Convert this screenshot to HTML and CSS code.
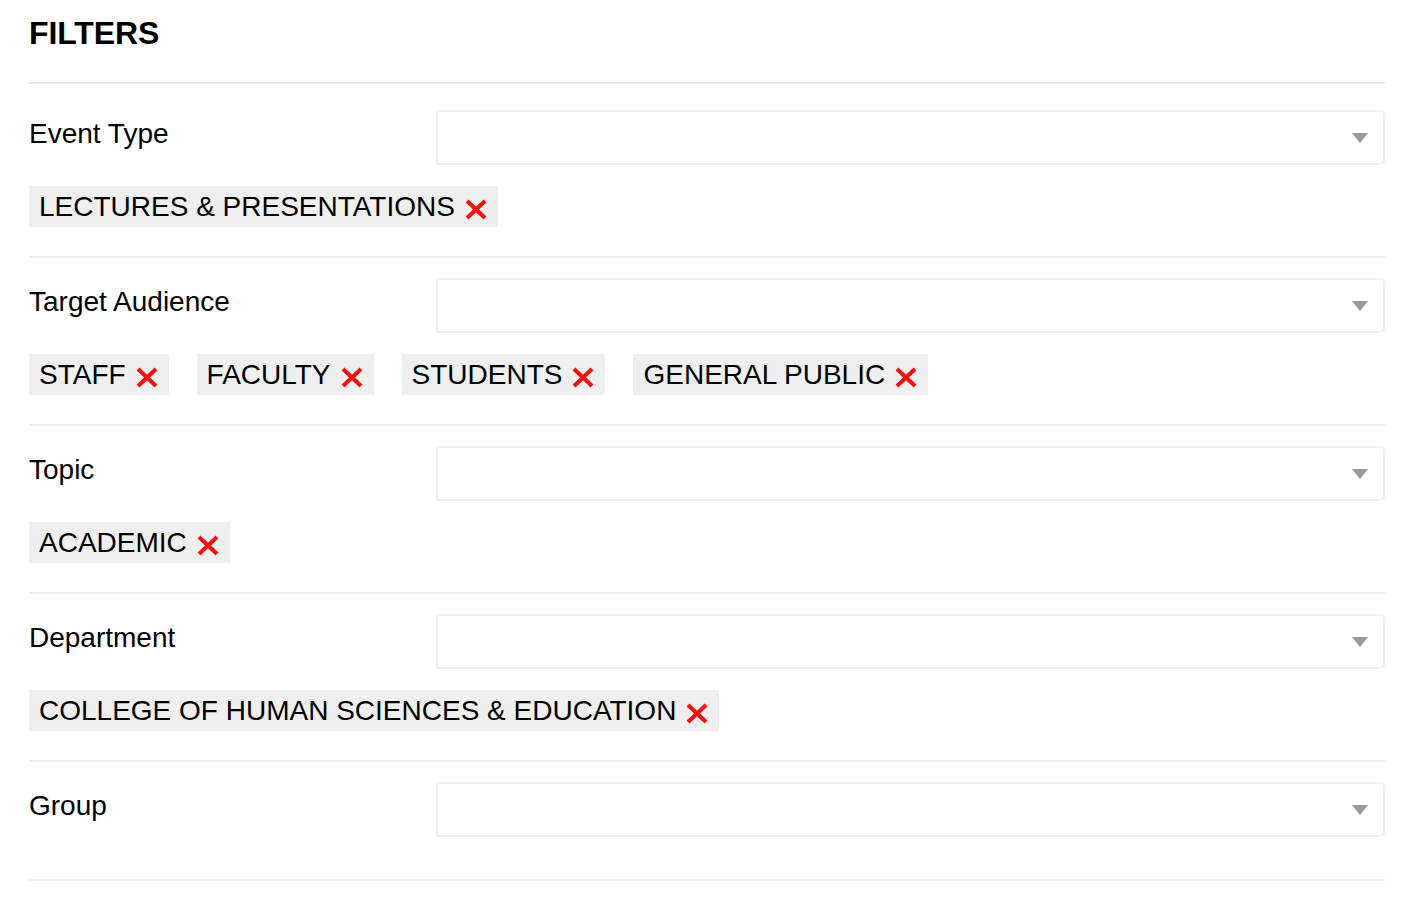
FILE: index.html
```html
<!DOCTYPE html>
<html lang="en">
	<head>
		<meta charset="UTF-8" />
		<meta name="viewport" content="width=device-width, initial-scale=1.0" />
		<title>Filters</title>
		<link rel="stylesheet" href="styles.css">
	</head>
	<body>
		<div class="filters">
			<h2 class="filters__title">FILTERS</h2>

			<div class="filter">
				<div class="filter__row">
					<label class="filter__label">Event Type</label>
					<div class="select"><span class="select__arrow"></span></div>
				</div>
				<div class="chips">
					<span class="chip">LECTURES &amp; PRESENTATIONS<svg class="chip__x" viewBox="0 0 22 21"><path d="M2 2 L20 19 M20 2 L2 19" /></svg></span>
				</div>
			</div>

			<div class="filter">
				<div class="filter__row">
					<label class="filter__label">Target Audience</label>
					<div class="select"><span class="select__arrow"></span></div>
				</div>
				<div class="chips">
					<span class="chip">STAFF<svg class="chip__x" viewBox="0 0 22 21"><path d="M2 2 L20 19 M20 2 L2 19" /></svg></span>
					<span class="chip">FACULTY<svg class="chip__x" viewBox="0 0 22 21"><path d="M2 2 L20 19 M20 2 L2 19" /></svg></span>
					<span class="chip">STUDENTS<svg class="chip__x" viewBox="0 0 22 21"><path d="M2 2 L20 19 M20 2 L2 19" /></svg></span>
					<span class="chip">GENERAL PUBLIC<svg class="chip__x" viewBox="0 0 22 21"><path d="M2 2 L20 19 M20 2 L2 19" /></svg></span>
				</div>
			</div>

			<div class="filter">
				<div class="filter__row">
					<label class="filter__label">Topic</label>
					<div class="select"><span class="select__arrow"></span></div>
				</div>
				<div class="chips">
					<span class="chip">ACADEMIC<svg class="chip__x" viewBox="0 0 22 21"><path d="M2 2 L20 19 M20 2 L2 19" /></svg></span>
				</div>
			</div>

			<div class="filter">
				<div class="filter__row">
					<label class="filter__label">Department</label>
					<div class="select"><span class="select__arrow"></span></div>
				</div>
				<div class="chips">
					<span class="chip">COLLEGE OF HUMAN SCIENCES &amp; EDUCATION<svg class="chip__x" viewBox="0 0 22 21"><path d="M2 2 L20 19 M20 2 L2 19" /></svg></span>
				</div>
			</div>

			<div class="filter filter--empty">
				<div class="filter__row">
					<label class="filter__label">Group</label>
					<div class="select"><span class="select__arrow"></span></div>
				</div>
			</div>
		</div>
	</body>
</html>
```

FILE: styles.css
```css
* {
	box-sizing: border-box;
	margin: 0;
	padding: 0;
}

body {
	font-family: "Liberation Sans", Arial, sans-serif;
	background-color: #fff;
	color: #000;
}

.filters {
	width: 1356px;
	margin-left: 29px;
}

.filters__title {
	font-size: 32px;
	font-weight: bold;
	letter-spacing: -0.1px;
	line-height: 36px;
	padding-top: 15px;
	padding-bottom: 31px;
	border-bottom: 2px solid #e6e6e6;
	margin-bottom: 6px;
}

.filter {
	padding: 20px 0 21px;
	border-bottom: 2px solid #eeeeee;
}

.filter--empty {
	padding-bottom: 42px;
}

.filter__row {
	display: flex;
	align-items: center;
	height: 55px;
}

.filter__label {
	width: 407px;
	font-size: 28px;
	padding-bottom: 7px;
}

.select {
	flex: 1;
	height: 55px;
	border: 2px solid #efefef;
	border-radius: 4px;
	display: flex;
	align-items: center;
	justify-content: flex-end;
	padding-right: 15px;
}

.select__arrow {
	width: 0;
	height: 0;
	border-left: 8px solid transparent;
	border-right: 8px solid transparent;
	border-top: 10px solid #9a9a9a;
}

.chips {
	display: flex;
	flex-wrap: wrap;
	gap: 28px;
	margin-top: 21px;
	margin-bottom: 8px;
}

.chip {
	display: inline-flex;
	align-items: center;
	height: 41px;
	padding: 0 11px 0 10px;
	background-color: #efefef;
	font-size: 28px;
}

.chip__x {
	width: 22px;
	height: 21px;
	margin-left: 10px;
	margin-top: 6px;
	fill: none;
	stroke: #ff0d0d;
	stroke-width: 4;
}
```
